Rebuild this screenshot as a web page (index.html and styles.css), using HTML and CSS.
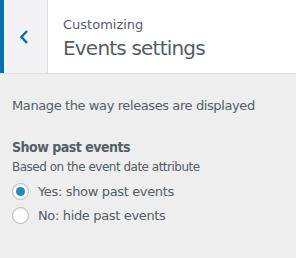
FILE: index.html
```html
<!DOCTYPE html>
<html>
<head>
<meta charset="utf-8">
<link rel="stylesheet" href="styles.css">
</head>
<body>
<div class="panel">
  <div class="header">
    <button class="back" aria-label="Back">
      <svg width="10" height="16" viewBox="0 0 10 16"><path d="M8 2 L2.5 8 L8 14" fill="none" stroke="#0073aa" stroke-width="2.4"/></svg>
    </button>
    <div class="titles">
      <span class="action">Customizing</span>
      <h3 class="title">Events settings</h3>
    </div>
  </div>
  <div class="body">
    <p class="desc">Manage the way releases are displayed</p>
    <div class="control">
      <span class="control-title">Show past events</span>
      <span class="control-desc">Based on the event date attribute</span>
      <label class="radio"><span class="dot checked"></span>Yes: show past events</label>
      <label class="radio"><span class="dot"></span>No: hide past events</label>
    </div>
  </div>
</div>
</body>
</html>
```
FILE: styles.css
```css
html, body {
  margin: 0;
  padding: 0;
  background: #eeeeee;
  font-family: "DejaVu Sans", Verdana, sans-serif;
  color: #555d66;
}
.header {
  display: flex;
  height: 73px;
  background: #fff;
  border-bottom: 1px solid #dddddd;
}
.back {
  width: 48px;
  box-sizing: border-box;
  border: none;
  border-left: 4px solid #0073aa;
  border-right: 1px solid #dddddd;
  background: #f3f3f5;
  padding: 0;
  margin: 0;
  display: flex;
  align-items: center;
  justify-content: center;
  padding-right: 4px;
}
.titles {
  display: flex;
  flex-direction: column;
  padding: 17px 0 0 15px;
}
.action {
  font-size: 13px;
  line-height: 16px;
  color: #555d66;
}
.title {
  margin: 2px 0 0;
  font-size: 20px;
  line-height: 26px;
  font-weight: 400;
  letter-spacing: -0.8px;
  color: #555d66;
}
.body {
  padding: 23px 12px 0;
}
.desc {
  margin: 0;
  font-size: 13px;
  line-height: 18px;
  letter-spacing: -0.4px;
}
.control {
  display: flex;
  flex-direction: column;
  margin-top: 22px;
}
.control-title {
  font-family: "DejaVu Sans Condensed", "DejaVu Sans", sans-serif;
  font-size: 14px;
  font-weight: 700;
  line-height: 20px;
  letter-spacing: -0.5px;
  color: #555d66;
}
.control-desc {
  font-size: 12px;
  line-height: 18px;
  margin-top: 1px;
  letter-spacing: -0.5px;
}
.radio {
  display: flex;
  align-items: center;
  font-size: 13px;
  line-height: 16px;
  margin-top: 7px;
  letter-spacing: -0.35px;
}
.radio + .radio { margin-top: 7px; }
.dot {
  width: 17px;
  height: 17px;
  box-sizing: border-box;
  border: 1px solid #b4b9be;
  border-radius: 50%;
  background: #fff;
  margin-right: 9px;
  box-shadow: inset 0 1px 2px rgba(0,0,0,0.1);
  display: flex;
  align-items: center;
  justify-content: center;
}
.dot.checked::after {
  content: "";
  width: 9px;
  height: 9px;
  border-radius: 50%;
  background: #1e8cbe;
}
```
